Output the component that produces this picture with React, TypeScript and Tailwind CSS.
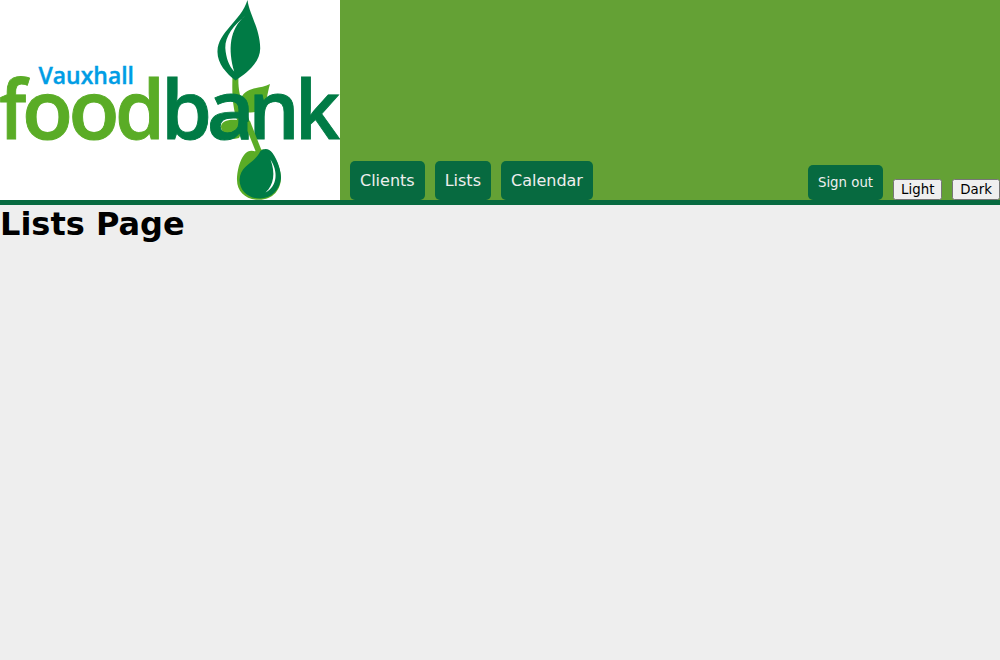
import type { ReactNode } from 'react';

type Glyph = { ch: string; x: number; w: number };

const food: Glyph[] = [
  { ch: 'f', x: -0.8, w: 27 },
  { ch: 'o', x: 21.9, w: 51 },
  { ch: 'o', x: 68.4, w: 51 },
  { ch: 'd', x: 114.9, w: 50 },
];

const bank: Glyph[] = [
  { ch: 'b', x: 161, w: 51 },
  { ch: 'a', x: 206.7, w: 48 },
  { ch: 'n', x: 248.3, w: 51.5 },
  { ch: 'k', x: 295, w: 45 },
];

function Word({ glyphs, className }: { glyphs: Glyph[]; className: string }) {
  return (
    <g className={className} fontSize="81.5" fontWeight="600" strokeWidth="0.9">
      {glyphs.map((g, i) => (
        <text key={i} x={g.x} y="139" textLength={g.w} lengthAdjust="spacingAndGlyphs">
          {g.ch}
        </text>
      ))}
    </g>
  );
}

function Logo() {
  return (
    <svg viewBox="0 0 340 200" className="h-[200px] w-[340px] shrink-0 bg-white font-['Open_Sans',sans-serif]">
      <path className="fill-[#5aac26]" d="M232.500 76H238.500C238 86 239 94 243 104L250 122L245 125L239 138L234 139C228 135 221 133 221 127C221 121 229 119 237 120C232 106 232 90 232.500 76Z" />
      <path className="fill-[#5aac26]" d="M241 98C247 86 262 89 270 84C267 94 267 105 260 110C256 113 250 112 246 113Z" />
      <path className="fill-[#007b45]" d="M247.500 0C249 13 260 29 260.200 48C260.500 62 247 73 235.500 80.500C226 73 217 63 217.500 51C218 32 241 21 247.500 0Z" />
      <path className="fill-white" d="M245.500 15.500C234 25 225 36 225.300 48C226 58 229 66 234.200 71.500C228 50 229 29 245.500 15.500Z" />
      <Word glyphs={food} className="fill-[#5aac26] stroke-[#5aac26]" />
      <Word glyphs={bank} className="fill-[#007b45] stroke-[#007b45]" />
      <path className="fill-[#5aac26]" d="M247.500 122L250 121L263 154L257.500 156L247.500 131Z" />
      <path className="fill-[#5aac26]" d="M253 151C242 149 237 169 237 180C237 192 246 199.800 259 199.800C273 199.500 281 190 281 177C280 165 274 153 266 150C261 148 257 152 253 151Z" />
      <path className="fill-[#007b45]" d="M260.500 151C264 148 269 148 272.500 153C278 161 281 171 281 178C280 190 271 198.500 260 198.500C248 198.500 240 191 239.500 180C240 165 254 164 260.500 151Z" />
      <path className="fill-white" d="M270.500 159.500C278 171 278 186 265.500 192.500C274 185 275.500 173 270.500 159.500Z" />
      <text x="38.500" y="83.500" fontSize="24" fontWeight="600" strokeWidth="0.4" textLength="95.500" lengthAdjust="spacingAndGlyphs" className="fill-[#009de5] stroke-[#009de5]">
        Vauxhall
      </text>
    </svg>
  );
}

function NavLink({ children }: { children: ReactNode }) {
  return (
    <a href="#" className="rounded-[5px] bg-[#076a40] p-2.5 text-base leading-[19px] text-[#eee]">
      {children}
    </a>
  );
}

function ThemeButton({ children }: { children: ReactNode }) {
  return (
    <button className="h-[21px] rounded-[2.5px] border border-[#767676] bg-[#efefef] px-[7px] text-[13.333px] leading-4 text-black">
      {children}
    </button>
  );
}

export default function App() {
  return (
    <div className="min-h-screen bg-[#eee] font-['DejaVu_Sans',sans-serif] text-black">
      <header className="flex h-[205px] items-end border-b-[5px] border-[#076a40] bg-[#64a135]">
        <Logo />
        <nav className="ml-2.5 flex items-end gap-2.5">
          <NavLink>Clients</NavLink>
          <NavLink>Lists</NavLink>
          <NavLink>Calendar</NavLink>
        </nav>
        <div className="ml-auto flex items-end gap-2.5">
          <button className="rounded-[5px] bg-[#076a40] p-2.5 text-[13.333px] leading-[15px] text-[#eee]">Sign out</button>
          <ThemeButton>Light</ThemeButton>
          <ThemeButton>Dark</ThemeButton>
        </div>
      </header>
      <main>
        <h1 className="text-[32px] leading-[38px] font-bold">Lists Page</h1>
      </main>
    </div>
  );
}
